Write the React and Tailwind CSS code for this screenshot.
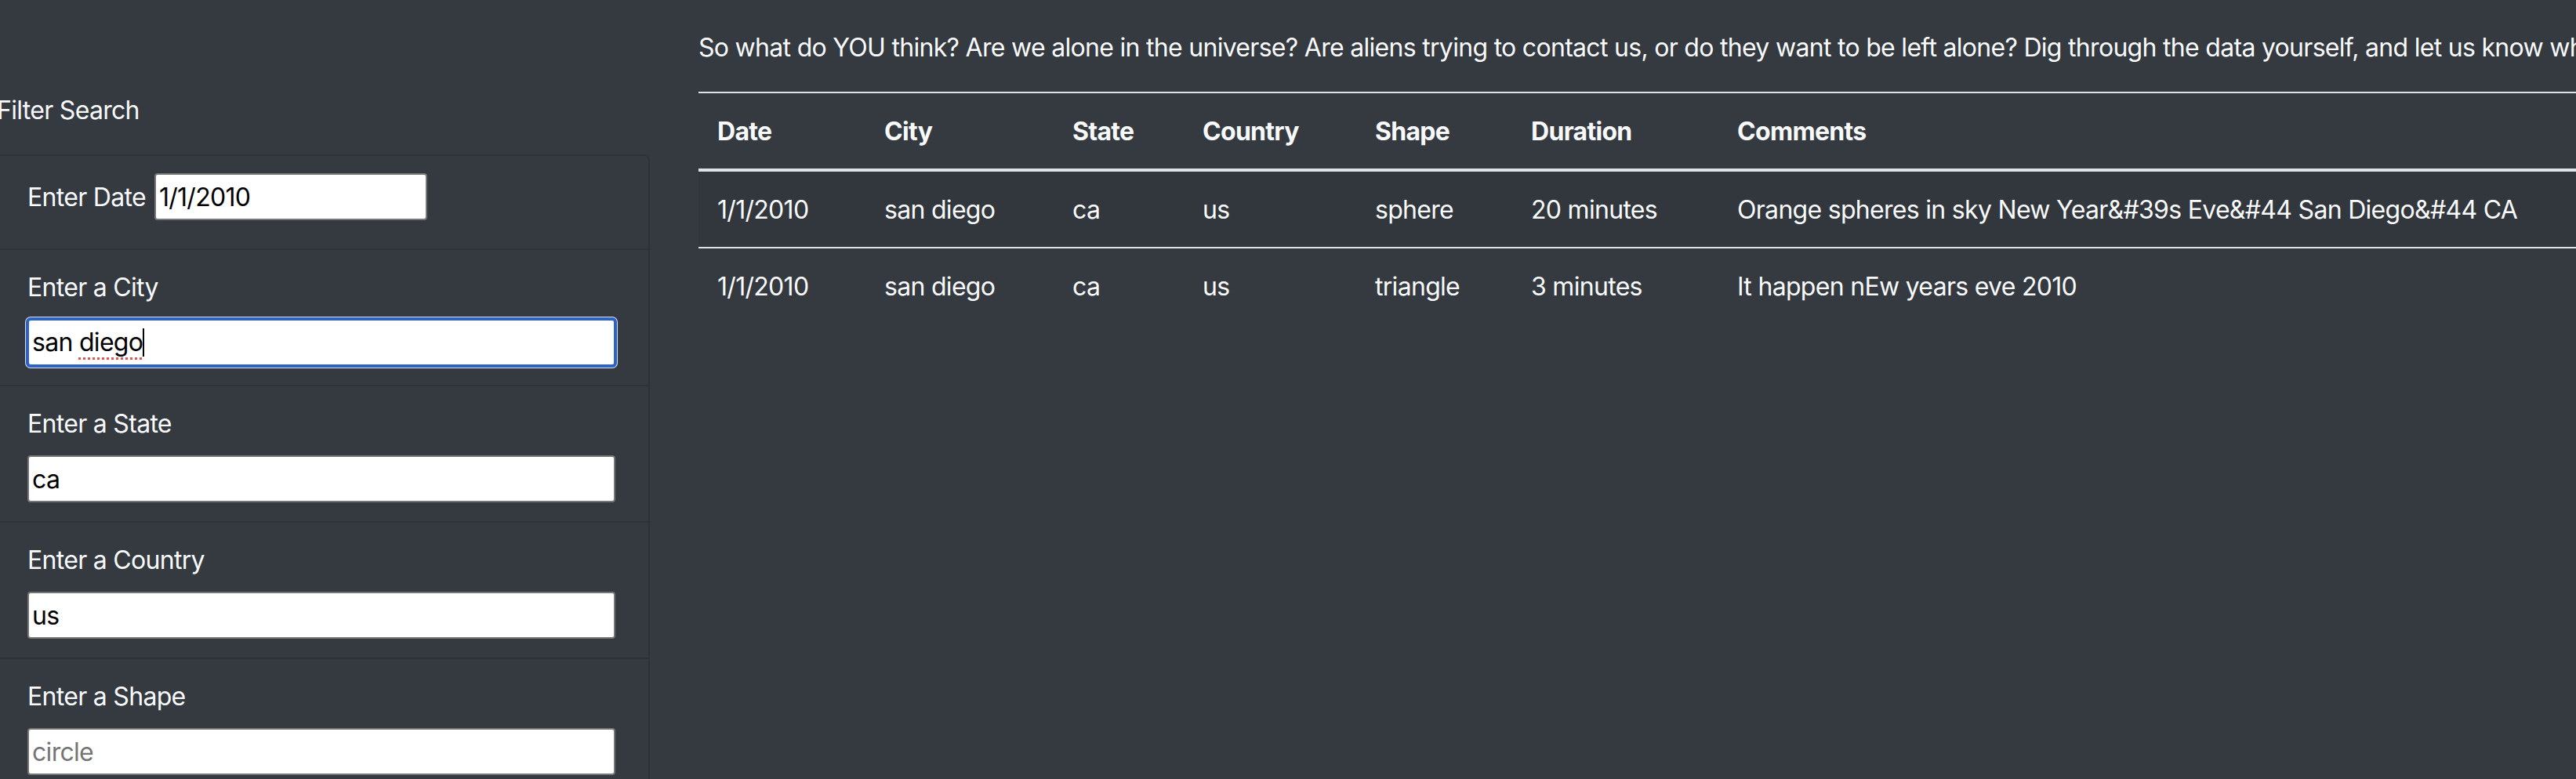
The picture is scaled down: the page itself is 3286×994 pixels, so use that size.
import React from "react";

const rows = [
  ["1/1/2010", "san diego", "ca", "us", "sphere", "20 minutes", "Orange spheres in sky New Year&#39s Eve&#44 San Diego&#44 CA"],
  ["1/1/2010", "san diego", "ca", "us", "triangle", "3 minutes", "It happen nEw years eve 2010"],
];

const heads = ["Date", "City", "State", "Country", "Shape", "Duration", "Comments"];
const widths = ["w-[213px]", "w-[240px]", "w-[166px]", "w-[220px]", "w-[199px]", "w-[263px]", ""];

function Field({ label, value, placeholder }) {
  return (
    <div className="border-t-2 border-[#2d3237] px-[40px] pt-[24px] pb-[24px]">
      <label className="block leading-[48px] mb-[16px]">{label}</label>
      <input
        readOnly
        value={value || ""}
        placeholder={placeholder}
        className="block w-[750px] h-[60px] bg-white text-black border-2 border-[#767676] rounded-[4px] px-[4px] leading-[48px] text-[32px] tracking-[-0.7px] placeholder:text-[#757575] outline-none"
      />
    </div>
  );
}

export default function App() {
  return (
    <div
      className="min-h-[994px] w-full overflow-hidden bg-[#343a40] text-[#f8f9fa] text-[32px] leading-[48px] tracking-[-0.7px] flex"
      style={{ fontFamily: 'Inter, "Noto Sans", sans-serif' }}
    >
      <aside className="w-[834px] shrink-0 -ml-[5px] pt-[117px]">
        <h5 className="leading-[48px] mb-[32px] ml-[1px] font-normal">Filter Search</h5>
        <div className="border-r-2 border-b-2 border-[#2d3237] rounded-tr-[8px] rounded-br-[8px] overflow-hidden">
          <div className="border-t-2 border-[#2d3237] px-[40px] pt-[22px] pb-[24px] flex items-baseline h-[120px]">
            <label className="leading-[48px] mr-[11px]">Enter Date</label>
            <input
              readOnly
              value="1/1/2010"
              className="w-[348px] h-[60px] bg-white text-black border-2 border-[#767676] rounded-[4px] px-[4px] leading-[48px] text-[32px] tracking-[-0.7px] outline-none"
            />
          </div>
          <div className="border-t-2 border-[#2d3237] px-[40px] pt-[24px] pb-[24px]">
            <label className="block leading-[48px] mb-[16px]">Enter a City</label>
            <div className="w-[750px] h-[60px] bg-white text-black border-2 border-[#2b63c9] rounded-[4px] px-[4px] leading-[54px] shadow-[0_0_0_2px_#2b63c9,0_0_0_3px_#d6e0f2] flex items-center">
              <span>san&nbsp;</span>
              <span className="underline decoration-dotted decoration-[#e5534b] decoration-[3px] underline-offset-[8px]">diego</span>
              <span className="inline-block w-[2px] h-[36px] bg-black"></span>
            </div>
          </div>
          <Field label="Enter a State" value="ca" />
          <Field label="Enter a Country" value="us" />
          <Field label="Enter a Shape" placeholder="circle" />
        </div>
      </aside>

      <main className="flex-1 min-w-0 ml-[62px] pt-[37px]">
        <p className="whitespace-nowrap mb-[32px]">
          So what do YOU think? Are we alone in the universe? Are aliens trying to contact us, or do they want to be left alone? Dig through the data yourself, and let us know what you find!
        </p>
        <table className="w-full table-fixed border-collapse text-left">
          <thead>
            <tr>
              {heads.map((h, i) => (
                <th
                  key={h}
                  className={`${widths[i]} border-t-2 border-b-4 border-[#dee2e6] px-[24px] pt-[25px] pb-[23px] font-bold leading-[48px] align-bottom`}
                >
                  {h}
                </th>
              ))}
            </tr>
          </thead>
          <tbody>
            {rows.map((r, ri) => (
              <tr key={ri} className={ri % 2 === 0 ? "bg-black/5" : ""}>
                {r.map((c, ci) => (
                  <td key={ci} className="border-t-2 border-[#dee2e6] px-[24px] pt-[25px] pb-[23px] leading-[48px] whitespace-nowrap align-top">
                    {c}
                  </td>
                ))}
              </tr>
            ))}
          </tbody>
        </table>
      </main>
    </div>
  );
}
